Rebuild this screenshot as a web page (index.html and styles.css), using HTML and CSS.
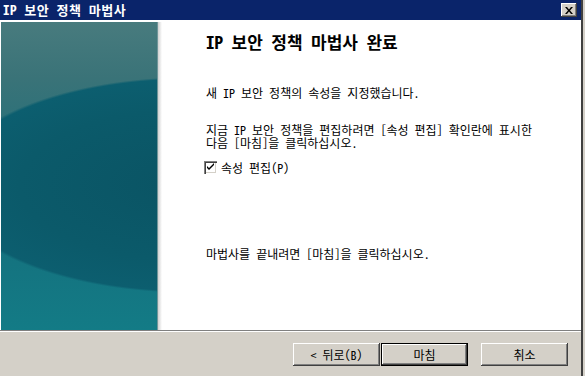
FILE: index.html
```html
<!DOCTYPE html>
<html lang="ko">
<head>
	<meta charset="UTF-8">
	<title>IP 보안 정책 마법사</title>
	<link rel="stylesheet" href="styles.css">
</head>
<body>
	<div class="window">
		<div class="titlebar">
			<span class="title">IP 보안 정책 마법사</span>
			<button class="close-btn" aria-label="닫기">
				<svg width="8" height="7" viewBox="0 0 8 7">
					<path d="M0 0h2l2 2.5 2-2.5h2L5 3.5 8 7H6L4 4.5 2 7H0l3-3.5z" fill="#000"/>
				</svg>
			</button>
		</div>

		<div class="wizard-body">
			<div class="side-art"></div>
			<div class="side-shadow"></div>
			<div class="content">
				<h1 class="heading">IP 보안 정책 마법사 완료</h1>
				<p class="line first">새 IP 보안 정책의 속성을 지정했습니다.</p>
				<p class="line second">지금 IP 보안 정책을 편집하려면 [속성 편집] 확인란에 표시한</p>
				<p class="line">다음 [마침]을 클릭하십시오.</p>
				<label class="check-row">
					<span class="check-box">
						<svg width="9" height="9" viewBox="0 0 9 9">
							<path d="M1 3v2l2 2 5-5V0L3 5z" fill="#000"/>
						</svg>
					</span>
					속성 편집(P)
				</label>
				<p class="line finish-note">마법사를 끝내려면 [마침]을 클릭하십시오.</p>
			</div>
		</div>

		<div class="separator"></div>

		<div class="footer">
			<button class="wiz-btn">&lt; 뒤로(B)</button>
			<button class="wiz-btn default">마침</button>
			<button class="wiz-btn cancel">취소</button>
		</div>
	</div>
</body>
</html>
```

FILE: styles.css
```css
body {
	margin: 0;
	width: 585px;
	height: 376px;
	overflow: hidden;
	background-color: #d4d0c8;
	font-family: "Noto Sans Mono CJK KR", "Noto Sans CJK KR", sans-serif;
	font-size: 12px;
	color: #000;
}

.window {
	width: 581px;
	height: 376px;
	border-right: 2px solid #404040;
	background-color: #d4d0c8;
}

.titlebar {
	display: flex;
	align-items: center;
	justify-content: space-between;
	height: 20px;
	padding: 0 4px 0 3px;
	background-color: #0a246a;
	box-sizing: border-box;
}

.title {
	color: #fff;
	font-weight: bold;
	font-size: 13px;
	letter-spacing: 0.6px;
	line-height: 20px;
}

.close-btn {
	display: flex;
	align-items: center;
	justify-content: center;
	width: 16px;
	height: 14px;
	padding: 0;
	border: none;
	background-color: #d4d0c8;
	box-shadow: inset -1px -1px #404040, inset 1px 1px #fff, inset -2px -2px #808080;
}

.wizard-body {
	display: flex;
	height: 310px;
	padding: 2px 0 0 1px;
	box-sizing: border-box;
	background-color: #fff;
}

.side-art {
	width: 157px;
	flex-shrink: 0;
	border-right: 1px solid #6f9599;
	box-sizing: border-box;
	background:
		radial-gradient(ellipse 245px 108px at 190px 163px, #0a5464 0%, #0b5a6a 70%, #0c5e6f 98%, transparent 100%),
		linear-gradient(to bottom, #487b7e 0%, #3a7378 18%, #156e7b 60%, #137b86 100%);
}

.side-shadow {
	width: 4px;
	flex-shrink: 0;
	background: linear-gradient(to right, #d0d0d0, #fff);
}

.content {
	flex: 1;
	padding: 9px 0 0 44px;
}

.heading {
	margin: 0;
	font-size: 17px;
	font-weight: bold;
	line-height: 22px;
}

.line {
	margin: 0;
	line-height: 13px;
}

.first {
	margin-top: 33px;
}

.second {
	margin-top: 24px;
}

.check-row {
	display: flex;
	align-items: center;
	gap: 4px;
	height: 13px;
	margin-top: 12px;
	margin-left: -2px;
	line-height: 13px;
}

.check-box {
	display: flex;
	align-items: center;
	justify-content: center;
	width: 13px;
	height: 13px;
	box-sizing: border-box;
	background-color: #fff;
	box-shadow: inset 1px 1px #808080, inset 2px 2px #404040, inset -1px -1px #fff, inset -2px -2px #d4d0c8;
}

.finish-note {
	margin-top: 73px;
}

.separator {
	height: 1px;
	background-color: #808080;
	border-bottom: 1px solid #fff;
}

.footer {
	display: flex;
	padding: 11px 0 0 293px;
}

.wiz-btn {
	width: 87px;
	height: 23px;
	padding: 0;
	border: none;
	font-family: "Noto Sans Mono CJK KR", "Noto Sans CJK KR", sans-serif;
	font-size: 12px;
	color: #000;
	background-color: #d4d0c8;
	box-shadow: inset -1px -1px #404040, inset 1px 1px #fff, inset -2px -2px #808080;
}

.default {
	margin-left: 1px;
	box-shadow: inset 0 0 0 1px #000, inset -2px -2px #404040, inset 2px 2px #fff, inset -3px -3px #808080;
}

.cancel {
	margin-left: 13px;
}
```
